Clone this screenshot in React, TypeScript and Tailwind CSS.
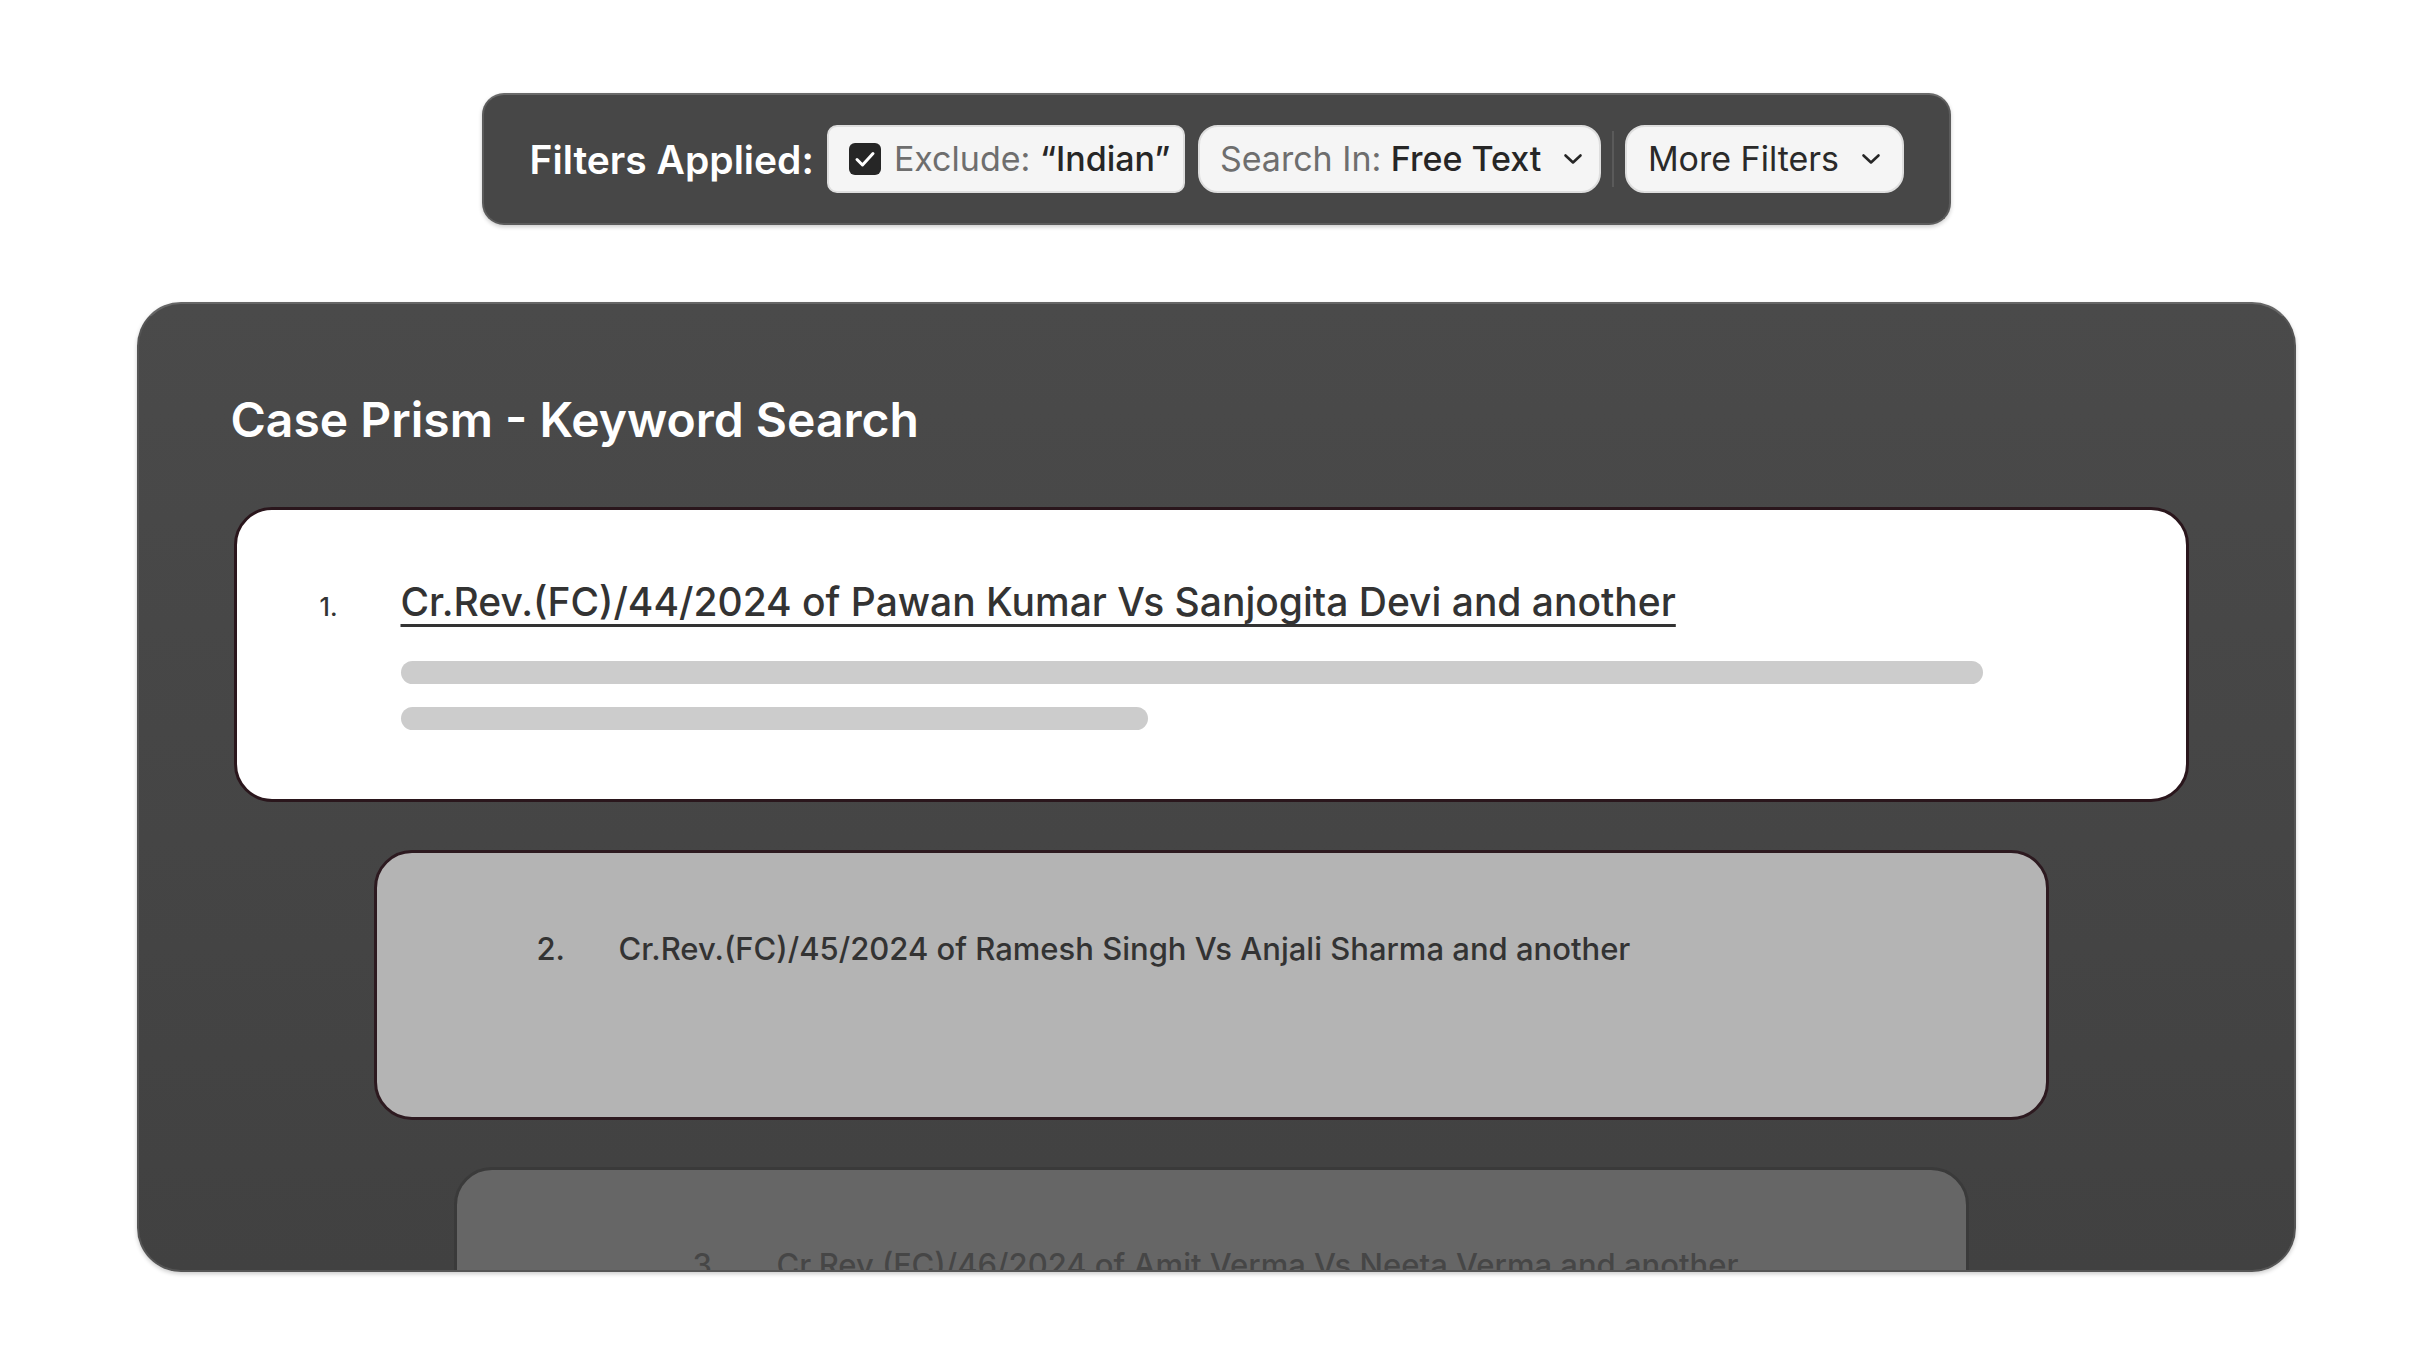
const results = [
  { n: 2, title: 'Cr.Rev.(FC)/45/2024 of Ramesh Singh Vs Anjali Sharma and another' },
  { n: 3, title: 'Cr.Rev.(FC)/46/2024 of Amit Verma Vs Neeta Verma and another' },
];

function Chevron() {
  return (
    <svg width="20" height="12" viewBox="0 0 20 12" fill="none" className="shrink-0">
      <path d="M2.5 2.5 L10 9.5 L17.5 2.5" stroke="#262626" strokeWidth="2.6" strokeLinecap="round" strokeLinejoin="round" />
    </svg>
  );
}

function CheckBox() {
  return (
    <svg width="32" height="32" viewBox="0 0 32 32" className="shrink-0">
      <rect x="0" y="0" width="32" height="32" rx="6" fill="#262626" />
      <path d="M8 16.5 L13.5 22 L24 10.5" stroke="#fff" strokeWidth="3" fill="none" strokeLinecap="round" strokeLinejoin="round" />
    </svg>
  );
}

function FilterBar() {
  return (
    <div className="mx-auto flex h-[132px] w-[1469px] items-center rounded-[22px] border-2 border-[#5c5c5c] border-t-[#6a6a6a] bg-[#474747] pl-[46px] shadow-[0_2px_4px_rgba(0,0,0,0.2)]">
      <span className="mr-[13px] text-[39px] font-semibold leading-none text-white">Filters Applied:</span>
      <div className="flex h-[68px] w-[358px] items-center gap-[13px] rounded-[10px] border-2 border-[#dedede] bg-[#f5f5f5] pl-[20px] text-[34px] leading-none">
        <CheckBox />
        <span className="text-[#6e6e6e]">
          Exclude: <span className="font-medium text-[#262626]">“Indian”</span>
        </span>
      </div>
      <div className="ml-[13px] flex h-[68px] w-[403px] items-center rounded-[20px] border-2 border-[#dedede] bg-[#f5f5f5] pl-[20px] text-[34px] leading-none">
        <span className="text-[#6e6e6e]">Search In:&nbsp;</span>
        <span className="font-medium text-[#262626]">Free Text</span>
        <span className="ml-[22px]">
          <Chevron />
        </span>
      </div>
      <div className="mx-[11px] h-[56px] w-[2px] bg-[#5a5a5a]" />
      <div className="flex h-[68px] w-[279px] items-center rounded-[20px] border-2 border-[#dedede] bg-[#f5f5f5] pl-[21px] text-[34px] leading-none">
        <span className="text-[#2a2a2a]">More Filters</span>
        <span className="ml-[22px]">
          <Chevron />
        </span>
      </div>
    </div>
  );
}

export default function App() {
  return (
    <div className="min-h-screen bg-white pt-[93px] font-['Inter','Noto_Sans',sans-serif]">
      <FilterBar />

      <div className="mx-auto mt-[77px] h-[970px] w-[2159px] overflow-hidden rounded-[44px] border-2 border-[#555] border-t-[#666] bg-linear-to-b from-[#4a4a4a] to-[#414141] pl-[95px] pt-[92px] shadow-[0_2px_4px_rgba(0,0,0,0.2)]">
        <div className="w-[1955px]">
          <h1 className="-ml-[3px] text-[48px] font-semibold leading-none text-white">Case Prism - Keyword Search</h1>

          <div className="mt-[63px] h-[295px] rounded-[38px] border-[3px] border-[#2a161c] bg-white pl-[83px] pt-[72px]">
            <div className="flex items-baseline">
              <span className="w-[81px] text-[25px] font-medium leading-none text-[#333]">1.</span>
              <a className="text-[39px] font-medium leading-none text-[#333] underline decoration-[2.5px] underline-offset-[8px]">
                Cr.Rev.(FC)/44/2024 of Pawan Kumar Vs Sanjogita Devi and another
              </a>
            </div>
            <div className="ml-[81px] mt-[40px] h-[23px] w-[1582px] rounded-full bg-[#cccccc]" />
            <div className="ml-[81px] mt-[23px] h-[23px] w-[747px] rounded-full bg-[#cccccc]" />
          </div>

          <div className="mx-auto mt-[48px] h-[270px] w-[1675px] rounded-[38px] border-[3px] border-[#2d1a20] bg-[#b4b4b4] pl-[160px] pt-[80px]">
            <div className="flex items-baseline text-[31px] font-medium leading-none text-[#333]">
              <span className="w-[82px]">{results[0].n}.</span>
              <span>{results[0].title}</span>
            </div>
          </div>

          <div className="mx-auto mt-[47px] h-[300px] w-[1515px] rounded-[38px] border-[3px] border-[#3a3a3a] bg-[#666666] pl-[236px] pt-[79px]">
            <div className="flex items-baseline text-[31px] font-medium leading-none text-[#464646]">
              <span className="w-[84px]">{results[1].n}.</span>
              <span>{results[1].title}</span>
            </div>
          </div>
        </div>
      </div>
    </div>
  );
}
